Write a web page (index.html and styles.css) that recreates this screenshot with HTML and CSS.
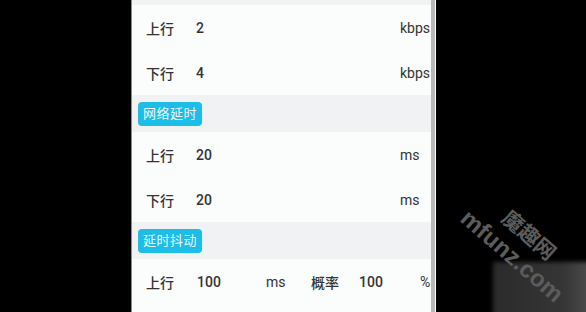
FILE: index.html
```html
<!DOCTYPE html>
<html>
<head>
<meta charset="utf-8">
<link rel="stylesheet" href="styles.css">
</head>
<body>
<div class="stage">
  <div class="panel">
    <div class="content">
      <div class="band band-top"></div>
      <div class="row">
        <span class="label">上行</span><span class="value">2</span><span class="unit">kbps</span>
      </div>
      <div class="row">
        <span class="label">下行</span><span class="value">4</span><span class="unit">kbps</span>
      </div>
      <div class="band"><span class="badge">网络延时</span></div>
      <div class="row">
        <span class="label">上行</span><span class="value">20</span><span class="unit">ms</span>
      </div>
      <div class="row">
        <span class="label">下行</span><span class="value">20</span><span class="unit">ms</span>
      </div>
      <div class="band"><span class="badge">延时抖动</span></div>
      <div class="row row-jitter">
        <span class="label">上行</span><span class="value">100</span><span class="unit">ms</span><span class="label">概率</span><span class="value">100</span><span class="unit">%</span>
      </div>
    </div>
    <div class="scrollbar"></div>
  </div>
  <div class="blob"></div>
  <span class="wm wm-cn">魔趣网</span>
  <span class="wm wm-en">mfunz.com</span>
</div>
</body>
</html>
```

FILE: styles.css
```css
html, body {
  margin: 0;
  padding: 0;
  background: #000;
}
.stage {
  position: relative;
  width: 586px;
  height: 312px;
  overflow: hidden;
  display: flex;
  padding-left: 131px;
  box-sizing: border-box;
  font-family: Roboto, "Noto Sans CJK SC", sans-serif;
}
.panel {
  display: flex;
  width: 305px;
  height: 312px;
  background: #fbfcfc;
  border-left: 1px solid #8a8a8a;
  box-sizing: border-box;
}
.content {
  flex: 1;
  display: flex;
  flex-direction: column;
}
.scrollbar {
  width: 4px;
  background: #b9b9b9;
  margin-right: 1px;
}
.band {
  height: 37px;
  flex: none;
  background: #f0f2f3;
  display: flex;
  align-items: center;
  padding-left: 6px;
}
.band-top {
  height: 5px;
}
.badge {
  width: 64px;
  height: 24px;
  border-radius: 4px;
  background: #1cbde6;
  color: #eefaff;
  font-size: 13px;
  line-height: 24px;
  text-align: center;
  letter-spacing: 0.5px;
}
.row {
  height: 45px;
  flex: none;
  display: grid;
  grid-template-columns: 50px 204px auto;
  align-items: center;
  padding-left: 14px;
  color: #333;
  font-size: 14px;
  font-weight: 500;
}
.row-jitter {
  height: 46px;
  grid-template-columns: 51px 69px 45px 48px 61px auto;
}
.unit {
  font-weight: 400;
}
.blob {
  position: absolute;
  left: 493px;
  top: 262px;
  width: 100px;
  height: 56px;
  background: linear-gradient(90deg, #2b2b2b 0%, #353535 70%, #4a4a4a 95%);
  filter: blur(2px);
}
.wm {
  position: absolute;
  color: #5c5c5c;
  font-family: "Liberation Sans", "Noto Sans CJK SC", sans-serif;
  font-weight: bold;
  white-space: nowrap;
  transform: translate(-50%, -50%) rotate(41deg);
}
.wm-en {
  left: 512px;
  top: 256px;
  font-size: 24px;
}
.wm-cn {
  left: 530px;
  top: 234px;
  font-size: 21px;
}
```
